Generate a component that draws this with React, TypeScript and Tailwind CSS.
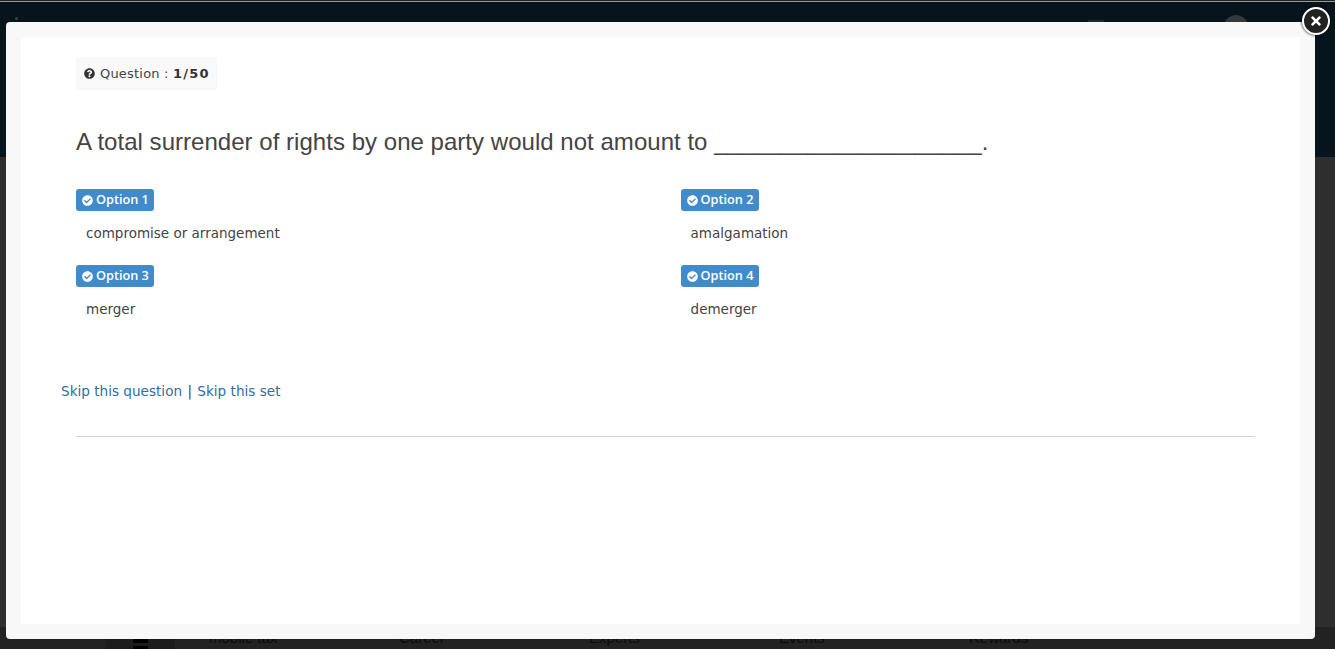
import { FaCheckCircle, FaQuestionCircle, FaTimes } from 'react-icons/fa';

const options = [
  { label: 'Option 1', text: 'compromise or arrangement' },
  { label: 'Option 2', text: 'amalgamation' },
  { label: 'Option 3', text: 'merger' },
  { label: 'Option 4', text: 'demerger' },
];

const navItems = ['mobile tax', 'Career', 'Experts', 'Events', 'Rewards'];

export default function App() {
  return (
    <div className="relative h-[649px] w-[1335px] overflow-hidden bg-[#202020] font-['DejaVu_Sans',sans-serif]">
      {/* page behind the popup */}
      <div className="mt-[1px] h-[156px] border-t border-[#9a9a9a] bg-[#06141e]" />
      <div className="h-[470px] bg-[#2e2e2e]" />
      <div className="flex h-[22px] items-start bg-[#222222] pl-[106px] font-['Liberation_Sans',sans-serif] text-[15px] leading-[22px] text-[#0c0c0c]">
        <div className="mr-[34px] flex h-[22px] w-[69px] flex-col items-center gap-[3px] bg-[#1c1c1c] pt-[12px]">
          <div className="h-[4px] w-[15px] bg-black" />
          <div className="h-[4px] w-[15px] bg-black" />
        </div>
        {navItems.map((item) => (
          <span key={item} className="w-[190px]">{item}</span>
        ))}
      </div>

      {/* header bits showing above the popup edge */}
      <div className="absolute left-[15px] top-[17px] h-[3px] w-[3px] rounded-full bg-[#39424a]" />
      <div className="absolute left-[1088px] top-[20px] h-[2px] w-[16px] bg-[#1f2a32]" />
      <div className="absolute left-[1224px] top-[15px] h-[24px] w-[24px] rounded-full bg-[#33383b]" />

      {/* popup */}
      <div className="absolute left-[6px] top-[22px] h-[617px] w-[1309px] rounded-[4px] bg-[#f8f8f8] p-[15px]">
        <div className="h-[587px] bg-white pl-[55px] pr-[45px] pt-[20px] text-[#444444]">
          <div className="inline-flex h-[33px] items-center gap-[5px] rounded-[3px] bg-[#f9f9f9] pl-[8px] pr-[7px] text-[13px] tracking-[0.2px]">
            <FaQuestionCircle className="h-[11px] w-[11px] text-[#333333]" />
            <span>
              Question : <b className="font-bold tracking-[1.2px] text-[#333333]">1/50</b>
            </span>
          </div>

          <h2 className="mt-[35px] font-['Liberation_Sans',sans-serif] text-[24px] leading-[34px] tracking-[0.03px] text-[#444444]">
            A total surrender of rights by one party would not amount to ____________________.
          </h2>

          <div className="mt-[30px] grid grid-cols-[604.6px_1fr] gap-y-[11px]">
            {options.map((option) => (
              <div key={option.label} className="h-[65px]">
                <span className="flex h-[22px] w-[78px] items-center gap-[3px] rounded-[3px] bg-[#428bca] pl-[6px] font-['Open_Sans',sans-serif] text-[12.7px] font-semibold text-white">
                  <FaCheckCircle className="h-[11px] w-[11px]" />
                  {option.label}
                </span>
                <p className="mt-[12px] pl-[10px] text-[13.5px] leading-[20px]">{option.text}</p>
              </div>
            ))}
          </div>

          <div className="-ml-[15px] mt-[51px] text-[13.6px] leading-[20px]">
            <a className="text-[#2f6f9f]">Skip this question</a>
            <span className="px-[1px]"> | </span>
            <a className="text-[#2f6f9f]">Skip this set</a>
          </div>

          <hr className="mt-[35px] border-[#d4d4d4]" />
        </div>
      </div>

      {/* close button */}
      <button className="absolute left-[1302px] top-[7px] flex h-[28px] w-[28px] items-center justify-center rounded-full border-2 border-white bg-[#222222] text-white shadow-[0_0_3px_#000]">
        <FaTimes className="h-[14px] w-[14px]" />
      </button>
    </div>
  );
}
